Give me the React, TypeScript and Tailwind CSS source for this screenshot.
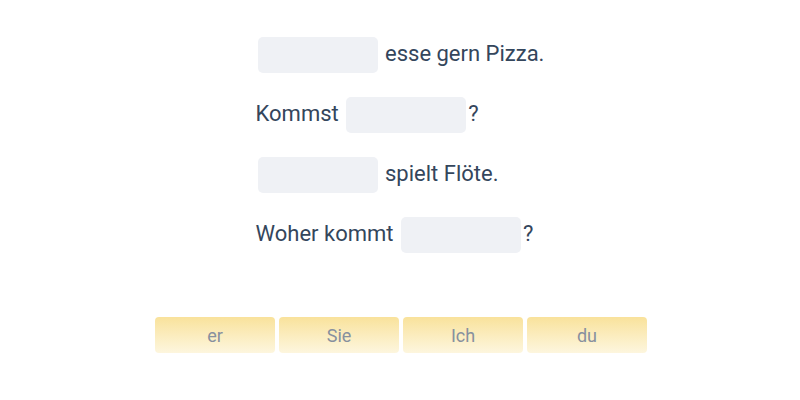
import React from "react";

const Blank = () => (
  <span className="inline-block w-[120px] h-[36px] mx-[2px] rounded-[5px] bg-[#eff1f5] align-middle" />
);

export default function App() {
  const rows: [string, string][] = [
    ["", "esse gern Pizza."],
    ["Kommst", "?"],
    ["", "spielt Flöte."],
    ["Woher kommt", "?"],
  ];
  const words = ["er", "Sie", "Ich", "du"];
  return (
    <div className="w-[800px] h-[400px] bg-white flex flex-col items-center" style={{ fontFamily: "Roboto, sans-serif" }}>
      <div className="pt-[37px] flex flex-col gap-[24px] text-[22px] text-[#34465c]">
        {rows.map(([pre, post], i) => (
          <div key={i} className="flex items-center h-[36px] whitespace-pre">
            {pre && <span className="mb-[3px]">{pre} </span>}
            <Blank />
            <span className="mb-[3px]">{post.startsWith("?") ? post : " " + post}</span>
          </div>
        ))}
      </div>
      <div className="mt-[64px] flex gap-[4px] pl-[2px]">
        {words.map((w) => (
          <div
            key={w}
            className="w-[120px] h-[36px] rounded-[4px] bg-gradient-to-b from-[#f9e29b] to-[#fdf6de] flex items-center justify-center text-[18px] text-[#87909e]"
          >
            {w}
          </div>
        ))}
      </div>
    </div>
  );
}
